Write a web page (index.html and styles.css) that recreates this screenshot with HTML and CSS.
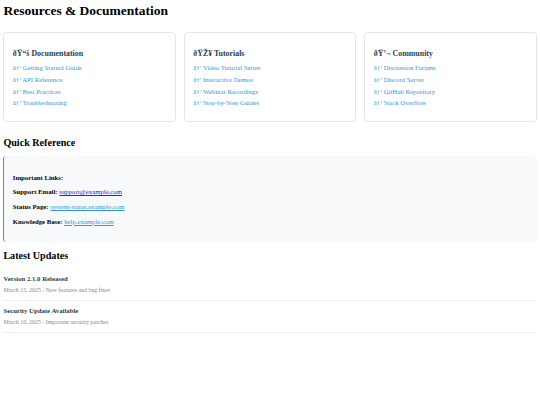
FILE: index.html
```html
<!DOCTYPE html>
<html>
<head>
    <meta charset="utf-8">
    <title>Resources &amp; Documentation</title>
    <link rel="stylesheet" href="styles.css">
</head>
<body>
    <h1>Resources &amp; Documentation</h1>
    <div class="resource-grid">
        <div class="resource-card">
            <h3>ðŸ“š Documentation</h3>
            <ul>
                <li><a href="#">â†’ Getting Started Guide</a></li>
                <li><a href="#">â†’ API Reference</a></li>
                <li><a href="#">â†’ Best Practices</a></li>
                <li><a href="#">â†’ Troubleshooting</a></li>
            </ul>
        </div>
        <div class="resource-card">
            <h3>ðŸŽ¥ Tutorials</h3>
            <ul>
                <li><a href="#">â†’ Video Tutorial Series</a></li>
                <li><a href="#">â†’ Interactive Demos</a></li>
                <li><a href="#">â†’ Webinar Recordings</a></li>
                <li><a href="#">â†’ Step-by-Step Guides</a></li>
            </ul>
        </div>
        <div class="resource-card">
            <h3>ðŸ’¬ Community</h3>
            <ul>
                <li><a href="#">â†’ Discussion Forums</a></li>
                <li><a href="#">â†’ Discord Server</a></li>
                <li><a href="#">â†’ GitHub Repository</a></li>
                <li><a href="#">â†’ Stack Overflow</a></li>
            </ul>
        </div>
    </div>

    <h2>Quick Reference</h2>
    <div class="quick-ref">
        <h4>Important Links:</h4>
        <p><strong>Support Email:</strong> <a href="mailto:support@example.com">support@example.com</a></p>
        <p><strong>Status Page:</strong> <a class="ref-link" href="#">system-status.example.com</a></p>
        <p><strong>Knowledge Base:</strong> <a class="ref-link" href="#">help.example.com</a></p>
    </div>

    <h2 class="updates-heading">Latest Updates</h2>
    <div class="update-item">
        <div class="update-title">Version 2.1.0 Released</div>
        <div class="update-date">March 15, 2025 - New features and bug fixes</div>
    </div>
    <div class="update-item">
        <div class="update-title">Security Update Available</div>
        <div class="update-date">March 10, 2025 - Important security patches</div>
    </div>
</body>
</html>
```

FILE: styles.css
```css
body {
    margin: 3.4px;
    font-family: "Liberation Serif", "Times New Roman", serif;
    font-size: 6.75px;
    color: #000;
    background-color: #fff;
}
h1 {
    font-size: 13.5px;
    line-height: 15.5px;
    margin: 0 0 12.7px;
}
h2 {
    font-size: 10.1px;
    line-height: 11.6px;
    margin: 8.4px 0 7.8px;
}
.resource-grid {
    display: grid;
    grid-template-columns: repeat(3, 1fr);
    gap: 8.4px;
    margin-bottom: 15px;
}
.resource-card {
    border: 1px solid #e4e6e9;
    border-radius: 3.4px;
    padding: 8.4px;
}
.resource-card h3 {
    font-size: 7.9px;
    line-height: 9px;
    margin: 8px 0 6.4px;
    color: #2c3e50;
}
.resource-card ul {
    list-style: none;
    padding: 0;
    margin: 0 0 5.4px;
}
.resource-card li {
    line-height: 7.8px;
    margin-bottom: 3.9px;
}
.resource-card a {
    color: #3498db;
    text-decoration: none;
}
.quick-ref {
    background-color: #f8f9fa;
    border-left: 1.7px solid #3498db;
    border-radius: 3.4px;
    padding: 8.4px 8.4px 9.4px;
}
.quick-ref h4 {
    font-size: 6.75px;
    line-height: 7.8px;
    margin: 9px 0 6.8px;
}
.quick-ref p {
    line-height: 7.8px;
    margin: 6.8px 0;
}
.quick-ref a {
    color: #2222ee;
}
.quick-ref a.ref-link {
    color: #3498db;
}
.updates-heading {
    margin-bottom: 7px;
}
.update-item {
    padding: 6.3px 0;
    border-bottom: 1px solid #eee;
}
.update-title {
    font-weight: bold;
    color: #2c3e50;
    line-height: 7.8px;
    margin-bottom: 4.2px;
}
.update-date {
    font-size: 5.9px;
    line-height: 6.8px;
    color: #7f8c8d;
}
```
